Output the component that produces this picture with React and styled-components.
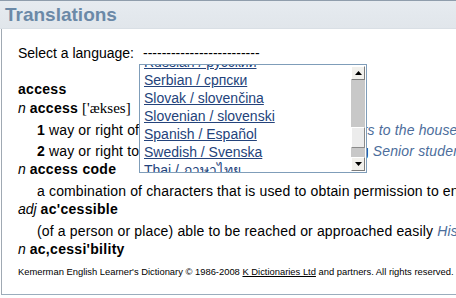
import React from 'react';
import styled, { createGlobalStyle } from 'styled-components';

const Global = createGlobalStyle`
  html, body { margin: 0; padding: 0; background: #fff; overflow: hidden; }
  body {
    font-family: "Liberation Sans", Arial, sans-serif;
    font-size: 14px;
    color: #000;
  }
`;

const Page = styled.div`
  width: 760px;
`;

const Header = styled.header`
  height: 27px;
  border-top: 1px solid #8f9dac;
  border-bottom: 1px solid #d9dfe5;
  background: linear-gradient(#e6ebf0, #e1e6eb);
  padding-left: 5px;
  display: flex;
  align-items: center;
`;

const Title = styled.h1`
  margin: 0;
  font-size: 19px;
  line-height: 27px;
  font-weight: bold;
  color: #6b89a7;
`;

const Body = styled.main`
  margin-left: 1px;
  border-left: 1px solid #a0a9b3;
  border-bottom: 1px solid #9badbd;
  padding: 15px 0 16px 16px;
`;

const SelectRow = styled.div`
  position: relative;
  display: flex;
  line-height: 18px;
  white-space: nowrap;
`;

const Dashes = styled.span`
  margin-left: 9px;
`;

const ListBox = styled.div`
  position: absolute;
  left: 121px;
  top: 20px;
  width: 228px;
  height: 109px;
  box-sizing: border-box;
  border: 1px solid #7f9db9;
  background: #fff;
  display: flex;
  z-index: 2;
`;

const Viewport = styled.div`
  flex: 1;
  overflow: hidden;
  padding-left: 4px;
`;

const ListInner = styled.div`
  margin-top: -12px;
`;

const Item = styled.a`
  display: block;
  line-height: 18px;
  color: #24437b;
  text-decoration: underline;
  font-family: "Liberation Sans", Arial, "Noto Sans", "DejaVu Sans", sans-serif;
`;

const ScrollBar = styled.div`
  width: 14px;
  display: flex;
  flex-direction: column;
  padding: 1px 0;
  margin-right: 1px;
`;

const ScrollButton = styled.div`
  height: 14px;
  box-sizing: border-box;
  background: #f1f0ec;
  border: 1px solid;
  border-color: #ffffff #7c7c7c #7c7c7c #ffffff;
  display: flex;
  align-items: center;
  justify-content: center;
`;

const Track = styled.div`
  flex: 1;
  background: #c8c8c8;
  display: flex;
  flex-direction: column;
`;

const Thumb = styled.div`
  margin-top: 47px;
  height: 21px;
  box-sizing: border-box;
  background: #ececec;
  border: 1px solid;
  border-color: #ffffff #8a8a8a #8a8a8a #ffffff;
`;

const Entries = styled.section`
  margin-top: 18px;
`;

const Head = styled.div`
  line-height: 19px;
  white-space: nowrap;
`;

const Sense = styled.div`
  padding-top: 3px;
  line-height: 18px;
  padding-left: 19px;
  white-space: nowrap;
  letter-spacing: 0.15px;
`;

const Pos = styled.i`
  font-style: italic;
`;

const Word = styled.b`
  font-weight: bold;
  letter-spacing: 0.3px;
`;

const Phon = styled.span`
  font-family: "Liberation Serif", "Times New Roman", serif;
  font-size: 15px;
`;

const Num = styled.b`
  font-weight: bold;
`;

const Ex = styled.i`
  font-style: italic;
  color: #4c6d9b;
`;

const Footer = styled.footer`
  margin-top: 7px;
  font-size: 9.4px;
  line-height: 12px;
  white-space: nowrap;
`;

const FootLink = styled.a`
  color: #000;
  text-decoration: underline;
`;

const Arrow = ({ down }) => (
  <svg width="7" height="4" viewBox="0 0 7 4">
    {down ? <polygon points="0,0 7,0 3.5,4" fill="#000" /> : <polygon points="0,4 7,4 3.5,0" fill="#000" />}
  </svg>
);

const languages = [
  'Russian / русский',
  'Serbian / српски',
  'Slovak / slovenčina',
  'Slovenian / slovenski',
  'Spanish / Español',
  'Swedish / Svenska',
  'Thai / ภาษาไทย',
  'Turkish / Türkçe',
];

export default function App() {
  return (
    <Page>
      <Global />
      <Header>
        <Title>Translations</Title>
      </Header>
      <Body>
        <SelectRow>
          <span>Select a language:</span>
          <Dashes>-------------------------</Dashes>
          <ListBox>
            <Viewport>
              <ListInner>
                {languages.map((l) => (
                  <Item key={l}>{l}</Item>
                ))}
              </ListInner>
            </Viewport>
            <ScrollBar>
              <ScrollButton><Arrow /></ScrollButton>
              <Track><Thumb /></Track>
              <ScrollButton><Arrow down /></ScrollButton>
            </ScrollBar>
          </ListBox>
        </SelectRow>
        <Entries>
          <Head><Word>access</Word></Head>
          <Head><Pos>n</Pos> <Word>access</Word> <Phon>['ækses]</Phon></Head>
          <Sense><Num>1</Num> way or right of entry or use of something <Ex>Two doors to the house are locked.</Ex></Sense>
          <Sense><Num>2</Num> way or right to get, approach, try or use something <Ex>Senior students have access to the library.</Ex></Sense>
          <Head><Pos>n</Pos> <Word>access code</Word></Head>
          <Sense>a combination of characters that is used to obtain permission to enter a computer system</Sense>
          <Head><Pos>adj</Pos> <Word>ac'cessible</Word></Head>
          <Sense>(of a person or place) able to be reached or approached easily <Ex>His office is always accessible.</Ex></Sense>
          <Head><Pos>n</Pos> <Word>ac,cessi'bility</Word></Head>
        </Entries>
        <Footer>
          Kemerman English Learner's Dictionary © 1986-2008 <FootLink>K Dictionaries Ltd</FootLink> and partners. All rights reserved.
        </Footer>
      </Body>
    </Page>
  );
}
